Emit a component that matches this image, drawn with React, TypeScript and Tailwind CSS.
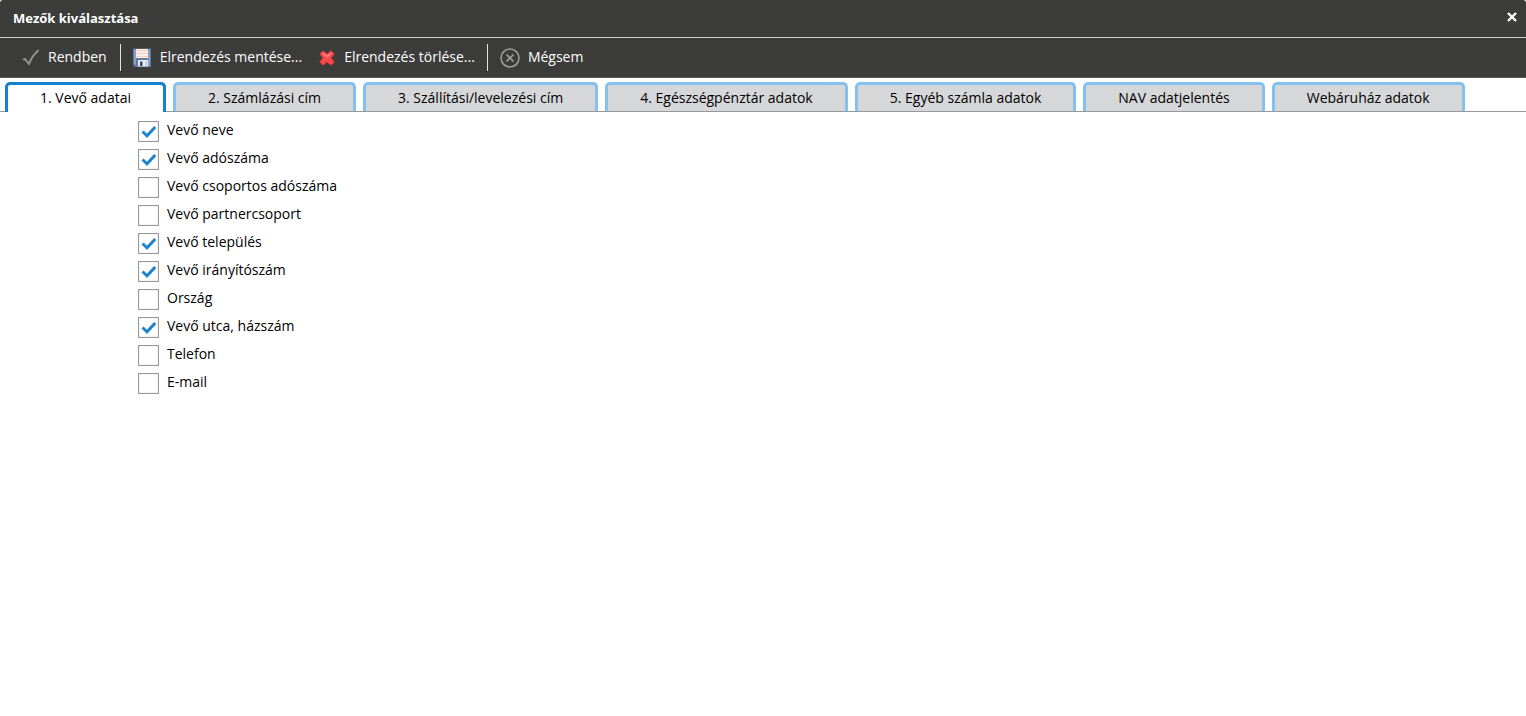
import React, { useState } from 'react';

type Field = { id: string; label: string; checked: boolean };

const TABS = [
  '1. Vevő adatai',
  '2. Számlázási cím',
  '3. Szállítási/levelezési cím',
  '4. Egészségpénztár adatok',
  '5. Egyéb számla adatok',
  'NAV adatjelentés',
  'Webáruház adatok',
];

const FIELDS: Field[] = [
  { id: 'nev', label: 'Vevő neve', checked: true },
  { id: 'adoszam', label: 'Vevő adószáma', checked: true },
  { id: 'csoportos', label: 'Vevő csoportos adószáma', checked: false },
  { id: 'partner', label: 'Vevő partnercsoport', checked: false },
  { id: 'telepules', label: 'Vevő település', checked: true },
  { id: 'irsz', label: 'Vevő irányítószám', checked: true },
  { id: 'orszag', label: 'Ország', checked: false },
  { id: 'utca', label: 'Vevő utca, házszám', checked: true },
  { id: 'telefon', label: 'Telefon', checked: false },
  { id: 'email', label: 'E-mail', checked: false },
];

const OkIcon = () => (
  <svg width="18" height="18" viewBox="0 0 18 18" fill="none">
    <path d="M1 10.500l2-.5 4 4.800C9 9.500 12 5 16.500 1.200" stroke="#92928f" strokeWidth="2" />
  </svg>
);

const SaveIcon = () => (
  <svg width="18" height="19" viewBox="0 0 18 19">
    <path d="M0 .5h18V19H2L0 17z" fill="#5f7ba3" />
    <path d="M1 1.500h2V17L1 16zM15 1.500h2V18h-2z" fill="#8ba0bd" />
    <path d="M3 1h12v9H3z" fill="#fdeee8" />
    <path d="M3 2.500h12M3 5.500h12M3 8.500h12" stroke="#f3cfc4" />
    <path d="M5 12h10v6.500H5z" fill="#e9edf3" />
    <path d="M7 13.500h2.500V18H7z" fill="#34486a" />
    <path d="M12.500 13h1.500v5h-1.500z" fill="#b9c5d6" />
  </svg>
);

const DeleteIcon = () => (
  <svg width="16" height="16" viewBox="0 0 16 16">
    <path
      d="M4 .8L8 4l4-3.200 3.200 3.200L12 8l3.200 4-3.200 3.200L8 12l-4 3.200L.8 12 4 8 .8 4z"
      fill="#f9494a"
      stroke="#d93a3c"
      strokeLinejoin="round"
    />
    <path d="M3.500 3l4.500 3.700L12.500 3" fill="none" stroke="#ff8582" strokeWidth="1.500" />
  </svg>
);

const CancelIcon = () => (
  <svg width="20" height="20" viewBox="0 0 20 20" fill="none" stroke="#a0a09e">
    <circle cx="10" cy="10" r="9" strokeWidth="1.500" />
    <path d="M6.500 6.500l7 7M13.500 6.500l-7 7" strokeWidth="1.600" />
  </svg>
);

const Separator = () => <div className="h-[27px] w-px bg-[#e4e4e4]" />;

const App: React.FC = () => {
  const [activeTab, setActiveTab] = useState(0);
  const [fields, setFields] = useState(FIELDS);

  const toggle = (id: string) =>
    setFields(fields.map((f) => (f.id === id ? { ...f, checked: !f.checked } : f)));

  return (
    <div className="min-h-screen bg-white font-['Open_Sans',sans-serif] text-sm text-black">
      {/* Title bar */}
      <header className="flex h-[38px] items-center justify-between rounded-t-[3px] border-b border-[#d0d0d0] bg-[#3c3c3a] pl-[13px] pr-2">
        <h1 className="text-[13px] font-bold text-white">Mezők kiválasztása</h1>
        <button aria-label="Bezárás" className="pb-1">
          <svg width="12" height="10" viewBox="0 0 12 10" stroke="#fff" strokeWidth="2.400">
            <path d="M2 1l8 8M10 1l-8 8" />
          </svg>
        </button>
      </header>

      {/* Toolbar */}
      <div className="flex h-10 items-center border-b border-[#555] bg-[#3c3c3a] pl-[22px] text-white">
        <button className="mr-[13px] flex items-center gap-2"><OkIcon /><span className="pb-[2px]">Rendben</span></button>
        <Separator />
        <button className="ml-3 mr-[17px] flex items-center gap-[9px]"><SaveIcon /><span className="pb-[2px]">Elrendezés mentése...</span></button>
        <button className="mr-3 flex items-center gap-[9px]"><DeleteIcon /><span className="pb-[2px]">Elrendezés törlése...</span></button>
        <Separator />
        <button className="ml-3 flex items-center gap-2"><CancelIcon /><span className="pb-[2px]">Mégsem</span></button>
      </div>

      {/* Tabs */}
      <div role="tablist" className="flex gap-[7px] border-b border-[#999] pl-[5px] pt-1">
        {TABS.map((tab, i) => (
          <button
            key={tab}
            role="tab"
            aria-selected={i === activeTab}
            onClick={() => setActiveTab(i)}
            className={`whitespace-nowrap rounded-t-[5px] border-x-[3px] border-t-[3px] px-8 ${
              i === activeTab ? '-mb-px h-[30px] border-[#1681cf] bg-white pb-px' : 'h-[29px] border-[#85c1ee] bg-[#d6d7d9]'
            }`}
          >
            {tab}
          </button>
        ))}
      </div>

      {activeTab === 0 && (
        <div role="tabpanel" className="pl-[138px] pt-[6px]">
          {fields.map((f) => (
            <div key={f.id} className="flex h-7 items-start">
              <div className="mt-[3px] grid size-[21px]">
                <input
                  id={f.id}
                  type="checkbox"
                  checked={f.checked}
                  onChange={() => toggle(f.id)}
                  className="peer col-start-1 row-start-1 size-[21px] appearance-none border border-[#999] bg-white shadow-[inset_0_0_1px_#999]"
                />
                <svg
                  viewBox="0 0 21 21"
                  className="pointer-events-none invisible col-start-1 row-start-1 size-[21px] peer-checked:visible"
                >
                  <path d="M4.500 10.500l4.500 4.300L17.200 6" fill="none" stroke="#1e84d0" strokeWidth="3" />
                </svg>
              </div>
              <label htmlFor={f.id} className="pl-2 leading-6">{f.label}</label>
            </div>
          ))}
        </div>
      )}
    </div>
  );
};

export default App;
